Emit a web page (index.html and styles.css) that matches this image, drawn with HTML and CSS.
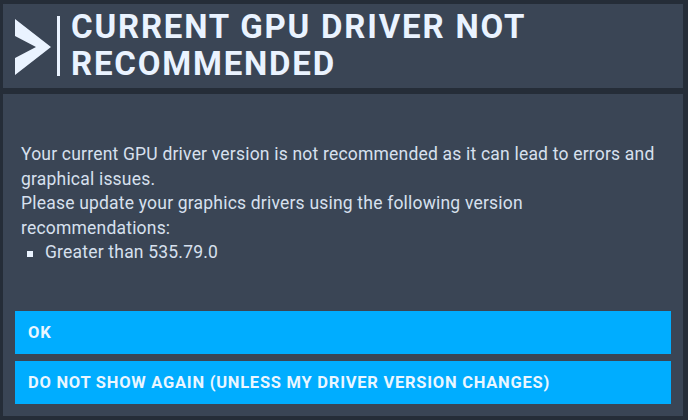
FILE: index.html
```html
<!DOCTYPE html>
<html>
<head>
<meta charset="utf-8">
<link rel="stylesheet" href="styles.css">
</head>
<body>
<div class="dialog">
  <header class="head">
    <svg class="chev" width="36" height="56" viewBox="0 0 36 56"><polygon points="0,0 36,28 0,56 0,39 21,28 0,17" fill="#eaf3ff"/></svg>
    <div class="bar"></div>
    <h1 class="title">CURRENT GPU DRIVER NOT<br>RECOMMENDED</h1>
  </header>
  <section class="body">
    <div class="msg">
      <p>Your current GPU driver version is not recommended as it can lead to errors and graphical issues.</p>
      <p>Please update your graphics drivers using the following version recommendations:</p>
      <ul class="list"><li>Greater than 535.79.0</li></ul>
    </div>
    <div class="buttons">
      <button class="btn">OK</button>
      <button class="btn">DO NOT SHOW AGAIN (UNLESS MY DRIVER VERSION CHANGES)</button>
    </div>
  </section>
</div>
</body>
</html>
```
FILE: styles.css
```css
html, body { margin: 0; padding: 0; }
body {
  background: #252d38;
  width: 688px;
  height: 420px;
  overflow: hidden;
  font-family: Roboto, "Liberation Sans", sans-serif;
}
.dialog {
  padding: 4px 5px 4px 3px;
  display: flex;
  flex-direction: column;
  gap: 6px;
}
.head {
  background: #3a4555;
  height: 84px;
  display: flex;
  align-items: flex-start;
  box-sizing: border-box;
  padding: 4px 12px 0 12px;
}
.chev { margin-top: 11px; flex: none; }
.bar {
  width: 3px;
  height: 60px;
  background: #eaf3ff;
  margin-left: 6px;
  margin-top: 8px;
  flex: none;
}
.title {
  margin: 0 0 0 11px;
  font-size: 33px;
  line-height: 37px;
  font-weight: 700;
  letter-spacing: 1.8px;
  color: #eaf3ff;
}
.body {
  background: #3a4555;
  height: 322px;
  box-sizing: border-box;
  padding: 48px 12px 12px 12px;
  display: flex;
  flex-direction: column;
}
.msg {
  padding-left: 6px;
  color: #d7e0ee;
  font-size: 17.5px;
  line-height: 24.5px;
  letter-spacing: 0.2px;
}
.msg p { margin: 0; }
.list { margin: 0; padding: 0; list-style: none; }
.list li { position: relative; padding-left: 24px; }
.list li::before {
  content: "";
  position: absolute;
  left: 6px;
  top: 11px;
  width: 6px;
  height: 6px;
  background: #eaf3ff;
}
.buttons {
  margin-top: auto;
  display: flex;
  flex-direction: column;
  gap: 7px;
}
.btn {
  height: 43px;
  border: 0;
  background: #00adff;
  color: #eaf6ff;
  font-family: Roboto, "Liberation Sans", sans-serif;
  font-weight: 700;
  font-size: 16.5px;
  letter-spacing: 0.75px;
  text-align: left;
  padding: 0 13px;
}
```
